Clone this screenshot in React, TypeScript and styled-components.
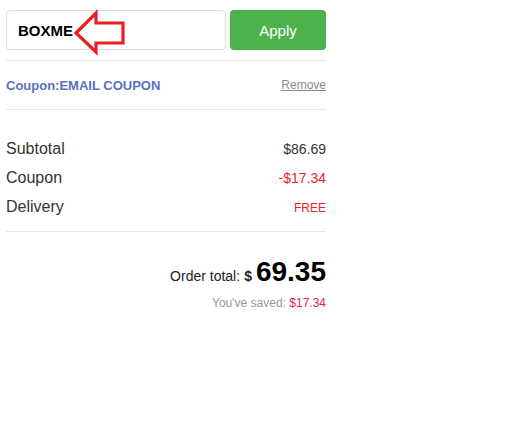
import React from "react";
import styled, { createGlobalStyle } from "styled-components";

const Global = createGlobalStyle`
  html, body { margin: 0; padding: 0; background: #fff; }
  body { font-family: "Liberation Sans", Arial, sans-serif; color: #333; }
`;

const Panel = styled.div`
  width: 320px;
  margin: 10px 0 0 6px;
`;

const CouponForm = styled.div`
  display: flex;
  gap: 4px;
  position: relative;
  padding-bottom: 10px;
  border-bottom: 1px solid #e8e8e8;
`;

const CodeInput = styled.div`
  box-sizing: border-box;
  width: 220px;
  height: 40px;
  border: 1px solid #dcdcdc;
  border-radius: 4px;
  display: flex;
  align-items: center;
  padding-left: 11px;
  font-size: 15px;
  font-weight: bold;
  color: #000;
`;

const ApplyButton = styled.button`
  width: 96px;
  height: 40px;
  border: none;
  border-radius: 4px;
  background: #4cb24c;
  color: #fff;
  font-family: "Liberation Sans", Arial, sans-serif;
  font-size: 15px;
  padding: 0;
`;

const Arrow = styled.svg`
  position: absolute;
  left: 66px;
  top: -2px;
`;

const CouponLine = styled.div`
  display: flex;
  justify-content: space-between;
  align-items: center;
  height: 48px;
  border-bottom: 1px solid #e8e8e8;
`;

const CouponName = styled.span`
  font-size: 13px;
  font-weight: bold;
  color: #5a6fc4;
`;

const RemoveLink = styled.a`
  font-size: 12px;
  color: #8a8a8a;
  text-decoration: underline;
`;

const Summary = styled.div`
  padding: 30px 0 4px;
  border-bottom: 1px solid #e8e8e8;
  display: flex;
  flex-direction: column;
`;

const Row = styled.div`
  display: flex;
  justify-content: space-between;
  align-items: baseline;
  height: 29px;
`;

const Label = styled.span`
  font-size: 16px;
  color: #333;
`;

const Value = styled.span<{ $red?: boolean; $small?: boolean }>`
  font-size: ${(p) => (p.$small ? "12px" : "14px")};
  color: ${(p) => (p.$red ? "#f01e2c" : "#333")};
`;

const Totals = styled.div`
  display: flex;
  flex-direction: column;
  align-items: flex-end;
  padding-top: 24px;
`;

const TotalLine = styled.div`
  display: flex;
  align-items: baseline;
  font-size: 14px;
  color: #222;
`;

const Currency = styled.span`
  font-weight: bold;
  margin: 0 4px 0 4px;
`;

const Amount = styled.span`
  font-size: 28px;
  font-weight: bold;
  color: #000;
`;

const Saved = styled.div`
  margin-top: 8px;
  font-size: 12px;
  color: #999;
`;

const SavedAmount = styled.span`
  color: #f01e48;
`;

export default function App() {
  return (
    <>
      <Global />
      <Panel>
        <CouponForm>
          <CodeInput>BOXME</CodeInput>
          <ApplyButton>Apply</ApplyButton>
          <Arrow width="60" height="50" viewBox="0 0 60 50">
            <path
              d="M4 25 L24 5 L24 15 L51 15 L51 35 L24 35 L24 44 Z"
              fill="#fff"
              stroke="#ec1c24"
              strokeWidth="3.2"
              strokeLinejoin="miter"
            />
          </Arrow>
        </CouponForm>
        <CouponLine>
          <CouponName>Coupon:EMAIL COUPON</CouponName>
          <RemoveLink>Remove</RemoveLink>
        </CouponLine>
        <Summary>
          <Row>
            <Label>Subtotal</Label>
            <Value>$86.69</Value>
          </Row>
          <Row>
            <Label>Coupon</Label>
            <Value $red>-$17.34</Value>
          </Row>
          <Row>
            <Label>Delivery</Label>
            <Value $red $small>FREE</Value>
          </Row>
        </Summary>
        <Totals>
          <TotalLine>
            Order total:<Currency>$</Currency>
            <Amount>69.35</Amount>
          </TotalLine>
          <Saved>
            You've saved: <SavedAmount>$17.34</SavedAmount>
          </Saved>
        </Totals>
      </Panel>
    </>
  );
}
